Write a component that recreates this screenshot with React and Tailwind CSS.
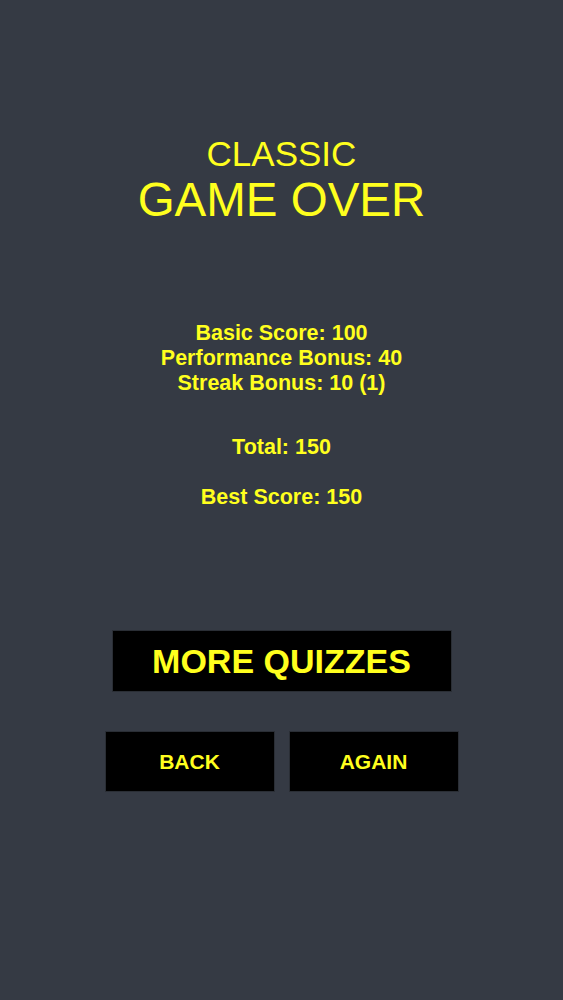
export default function App() {
  const lines = ['Basic Score: 100', 'Performance Bonus: 40', 'Streak Bonus: 10 (1)'];

  return (
    <div className="min-h-[1000px] w-full bg-[#353a44] text-[#ffff1e] font-['Liberation_Sans',Arial,sans-serif] flex flex-col items-center pt-[134px]">
      <div className="text-center">
        <div className="text-[35px] leading-[40px]">CLASSIC</div>
        <div className="text-[47.5px] leading-[52px]">GAME OVER</div>
      </div>

      <div className="mt-[95px] text-center font-bold text-[21.5px] leading-[25px]">
        {lines.map((l) => (
          <div key={l}>{l}</div>
        ))}
      </div>

      <div className="mt-[39px] font-bold text-[21.5px] leading-[25px]">Total: 150</div>
      <div className="mt-[25px] font-bold text-[21.5px] leading-[25px]">Best Score: 150</div>

      <button className="mt-[120px] w-[340px] h-[62px] bg-black border border-[#2a2e35] font-bold text-[34px] text-[#ffff1e]">
        MORE QUIZZES
      </button>

      <div className="mt-[39px] flex gap-[14px]">
        <button className="w-[170px] h-[61px] bg-black border border-[#2a2e35] font-bold text-[21px] text-[#ffff1e]">BACK</button>
        <button className="w-[170px] h-[61px] bg-black border border-[#2a2e35] font-bold text-[21px] text-[#ffff1e]">AGAIN</button>
      </div>
    </div>
  );
}
